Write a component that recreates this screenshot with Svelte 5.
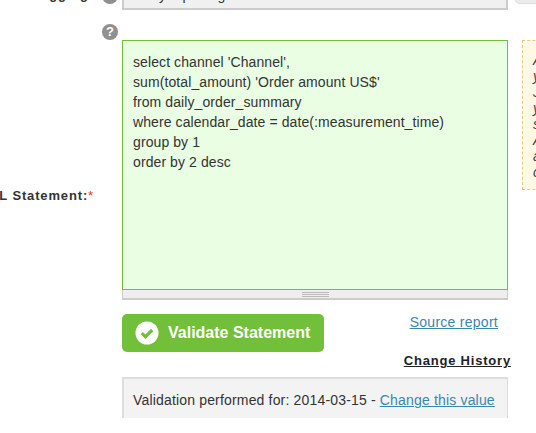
<script lang="ts">
  const sql = `select channel 'Channel',
sum(total_amount) 'Order amount US$'
from daily_order_summary
where calendar_date = date(:measurement_time)
group by 1
order by 2 desc`;
</script>

<div class="page">
  <!-- Row scrolled partly out of view -->
  <div class="row top-row">
    <div class="label">Tagging:</div>
    <div class="help-cell"><span class="help">?</span></div>
    <div class="select-box">Daily reporting</div>
    <div class="side-btn"></div>
  </div>

  <div class="row sql-row">
    <div class="label sql-label">SQL Statement:<span class="req">*</span></div>
    <div class="help-cell"><span class="help">?</span></div>
    <div class="field">
      <textarea class="sql" readonly spellcheck="false" value={sql}></textarea>
      <div class="grip"><span></span></div>

      <div class="actions">
        <button class="validate" type="button">
          <svg width="24" height="24" viewBox="0 0 24 24">
            <circle cx="12" cy="12" r="11.5" fill="#fff" />
            <path d="M6.8 12.2l3.6 3.6 6.8-6.8" fill="none" stroke="#72c03a" stroke-width="3.2" />
          </svg>
          Validate Statement
        </button>
        <a class="source" href="#source">Source report</a>
      </div>

      <div class="history-line"><a class="history" href="#history">Change History</a></div>

      <div class="validation">
        Validation performed for: 2014-03-15 - <a href="#change">Change this value</a>
      </div>
    </div>
    <div class="note">
      <em>A</em>
      <em>y</em>
      <em>J</em>
      <em>y</em>
      <em>s</em>
      <em>A</em>
      <em>a</em>
      <em>c</em>
    </div>
  </div>
</div>

<style>
  :global(body) {
    margin: 0;
    background: #fff;
  }

  .page {
    width: 536px;
    height: 433px;
    overflow: hidden;
    font-family: "Liberation Sans", Arial, sans-serif;
    font-size: 14px;
    color: #333;
  }

  .row {
    display: grid;
    grid-template-columns: 94px 28px 386px 29px;
    width: 537px;
  }

  .label {
    font-weight: 700;
    font-size: 13px;
    letter-spacing: 0.85px;
    text-align: right;
    color: #333;
    margin-left: -30px;
    white-space: nowrap;
  }

  /* ---- top row, cropped by the window ---- */
  .top-row {
    margin-top: -28px;
    height: 38px;
  }
  .top-row .label {
    padding-top: 15px;
  }
  .top-row .help-cell {
    padding-top: 16px;
  }
  .select-box {
    box-sizing: border-box;
    height: 38px;
    padding: 15px 11px 0;
    background: #f0f0f0;
    border: 1px solid #ccc;
    border-width: 0 2px 2px 2px;
    line-height: 16px;
  }
  .side-btn {
    height: 32px;
    margin-left: 6px;
    width: 30px;
    background: #ececec;
    border: 1px solid #ddd;
    border-radius: 6px;
    box-sizing: border-box;
  }

  /* ---- help bubble ---- */
  .help {
    display: block;
    width: 16px;
    height: 16px;
    border-radius: 50%;
    background: #8f8f8f;
    color: #fff;
    font-size: 13px;
    font-weight: 700;
    line-height: 16px;
    text-align: center;
    margin-left: 8px;
  }

  .sql-row {
    margin-top: 14px;
  }
  .sql-label {
    padding-top: 164px;
  }
  .req {
    color: #d33;
    font-weight: 400;
  }

  .field {
    margin-top: 16px;
    width: 386px;
  }

  .sql {
    display: block;
    box-sizing: border-box;
    width: 386px;
    height: 250px;
    margin: 0;
    padding: 11px 10px;
    background: #e9fee3;
    border: 1px solid #72c03a;
    font: 14px/20px "Liberation Sans", Arial, sans-serif;
    letter-spacing: 0.09px;
    color: #333;
    resize: none;
    outline: none;
    overflow: hidden;
  }

  .grip {
    box-sizing: border-box;
    height: 10px;
    background: #eee;
    border: 1px solid #ccc;
    border-width: 0 1px 2px 1px;
    display: flex;
    justify-content: center;
  }
  .grip span {
    display: block;
    width: 27px;
    height: 1px;
    margin-top: 2px;
    background: #bbb;
    box-shadow: 0 2px 0 #bbb, 0 4px 0 #bbb;
  }

  .actions {
    display: flex;
    justify-content: space-between;
    align-items: flex-start;
    margin-top: 14px;
  }

  .validate {
    display: flex;
    align-items: center;
    gap: 9px;
    box-sizing: border-box;
    width: 202px;
    height: 38px;
    padding: 0 0 0 13px;
    background: #72c03a;
    border: 0;
    border-radius: 5px;
    color: #fff;
    font: 700 16px "Liberation Sans", Arial, sans-serif;
    white-space: nowrap;
  }

  .source {
    margin: 0 10px 0 0;
    color: #3a87ad;
    font-size: 14px;
    letter-spacing: 0.27px;
    line-height: 16px;
  }

  .history-line {
    text-align: right;
    margin-right: -3px;
    line-height: 16px;
  }
  .history {
    color: #222;
    font-weight: 700;
    font-size: 13px;
    letter-spacing: 0.8px;
  }

  .validation {
    box-sizing: border-box;
    height: 41px;
    margin-top: 8px;
    padding: 12px 9px;
    background: #f3f3f3;
    border: 1px solid #ddd;
    border-width: 2px 1px 0 2px;
    line-height: 18px;
    letter-spacing: 0.17px;
    white-space: nowrap;
  }
  .validation a {
    color: #3a87ad;
  }

  /* ---- note, clipped at the window edge ---- */
  .note {
    box-sizing: border-box;
    height: 150px;
    width: 60px;
    margin: 16px 0 0 14px;
    padding: 12px 0 0 10px;
    background: #fff8e4;
    border: 1px dashed #e0cc7a;
    display: flex;
    flex-direction: column;
    gap: 1px;
    font-size: 14px;
    line-height: 15px;
    color: #444;
  }
</style>
